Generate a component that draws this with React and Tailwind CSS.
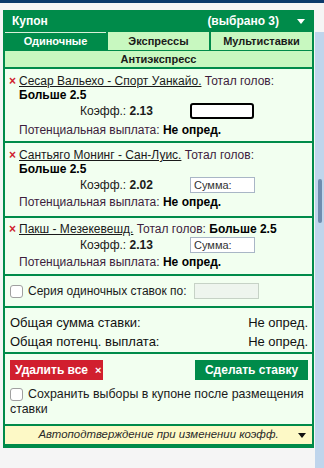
import React from "react";

const GREEN = "bg-[#008b4a]";

function Caret({ className = "" }) {
  return (
    <svg width="8" height="5" viewBox="0 0 8 5" className={className}>
      <path d="M0 0 L8 0 L4 5 Z" fill="currentColor" />
    </svg>
  );
}

function Title({ match, children }) {
  return (
    <div className="flex pl-[4px]">
      <span className="w-[10px] shrink-0 text-[#d01f2f] font-bold leading-[14px] text-[12px]">×</span>
      <div className="leading-[14px]">
        <span className="underline text-[#1a1a1a]">{match}</span>
        <span className="text-[#3d1d3d]"> Тотал голов: </span>
        {children}
      </div>
    </div>
  );
}

function KoefRow({ value, focused, className = "" }) {
  return (
    <div className={"flex items-center pl-[75px] h-[16px] " + className}>
      <div className="w-[110px] leading-[14px] text-[#1a1a1a]">
        Коэфф.: <b>{value}</b>
      </div>
      {focused ? (
        <div className="w-[64px] h-[16px] border-2 border-black rounded-[3px] bg-white" />
      ) : (
        <div className="w-[65px] h-[16px] border border-[#a9b6c6] bg-white flex items-center pl-[3px] text-[11px] text-[#333]">
          Сумма:
        </div>
      )}
    </div>
  );
}

function Payout({ className = "" }) {
  return (
    <div className={"pl-[14px] leading-[14px] " + className}>
      <span className="text-[#3d1d3d]">Потенциальная выплата: </span>
      <b className="text-black">Не опред.</b>
    </div>
  );
}

function Checkbox() {
  return (
    <span className="inline-block w-[13px] h-[13px] border border-[#a0a0a0] rounded-[3px] bg-white align-middle" />
  );
}

export default function App() {
  return (
    <div className="min-h-[468px] bg-[#f5f5f5] font-['Liberation_Sans',Arial,sans-serif] text-[12px] text-black">
      <div className="h-[3px] bg-[#0b3a6b]" />
      <div className="flex">
        <div className="pl-[3px] pt-[7px]">
          <div className={"w-[311px] " + GREEN + " p-[2px] pt-0"}>
            {/* header */}
            <div className="h-[22px] flex items-center pl-[7px] pr-[7px] text-white font-bold text-[12px]">
              <span>Купон</span>
              <span className="ml-auto mr-[18px]">(выбрано 3)</span>
              <Caret className="text-white" />
            </div>
            <div className="flex flex-col gap-[2px]">
              {/* tabs */}
              <div className="grid grid-cols-3 gap-[2px] h-[17px] font-bold text-[11px]">
                <div className="flex items-center justify-center text-white border-t border-[#d8f0d8]">Одиночные</div>
                <div className="flex items-center justify-center bg-[#c8f8c0] text-[#1a1a1a]">Экспрессы</div>
                <div className="flex items-center justify-center bg-[#c8f8c0] text-[#1a1a1a]">Мультиставки</div>
              </div>
              <div className="h-[16px] flex items-center justify-center bg-[#c8f8c0] font-bold text-[11px] text-[#1a1a1a]">
                Антиэкспресс
              </div>

              {/* item 1 */}
              <div className="h-[72px] bg-[#f2fff0] pt-[5px]">
                <Title match="Сесар Вальехо - Спорт Уанкайо." />
                <div className="pl-[14px] leading-[14px] font-bold">Больше 2.5</div>
                <KoefRow value="2.13" focused className="mt-[1px]" />
                <Payout className="mt-[4px]" />
              </div>

              {/* item 2 */}
              <div className="h-[73px] bg-[#f2fff0] pt-[5px]">
                <Title match="Сантьяго Монинг - Сан-Луис." />
                <div className="pl-[14px] leading-[14px] font-bold">Больше 2.5</div>
                <KoefRow value="2.02" className="mt-[1px]" />
                <Payout className="mt-[2px]" />
              </div>

              {/* item 3 */}
              <div className="h-[56px] bg-[#f2fff0] pt-[4px]">
                <Title match="Пакш - Мезекевешд.">
                  <b className="text-black">Больше 2.5</b>
                </Title>
                <KoefRow value="2.13" className="mt-[1px]" />
                <Payout className="mt-[2px]" />
              </div>

              {/* series */}
              <div className="h-[30px] bg-[#f2fff0] flex items-center pl-[5px]">
                <Checkbox />
                <span className="ml-[5px] text-[#1a1a1a]">Серия одиночных ставок по:</span>
                <div className="ml-auto mr-[53px] w-[65px] h-[16px] border border-[#c6d2c6] bg-[#eef5ee]" />
              </div>

              {/* totals */}
              <div className="h-[44px] bg-[#f2fff0] pt-[5px] pl-[5px] pr-[4px] text-[#111] text-[13px]">
                <div className="flex justify-between leading-[19px]">
                  <span>Общая сумма ставки:</span>
                  <span>Не опред.</span>
                </div>
                <div className="flex justify-between leading-[19px]">
                  <span>Общая потенц. выплата:</span>
                  <span>Не опред.</span>
                </div>
              </div>

              {/* buttons */}
              <div className="h-[70px] bg-[#f2fff0] pt-[6px] pl-[5px] pr-[4px]">
                <div className="flex justify-between">
                  <div className="w-[93px] h-[20px] bg-[#d11f2e] text-white font-bold flex items-center pl-[5px]">
                    Удалить все
                    <span className="ml-[7px] text-[11px]">×</span>
                  </div>
                  <div className="w-[113px] h-[20px] bg-[#008b4a] text-white font-bold flex items-center justify-center">
                    Сделать ставку
                  </div>
                </div>
                <div className="mt-[7px] leading-[15px] text-[12.4px] text-[#1a1a1a]">
                  <Checkbox />
                  <span className="ml-[5px]">Сохранить выборы в купоне после размещения ставки</span>
                </div>
              </div>

              {/* yellow */}
              <div className="h-[18px] bg-[#fdf9c6] flex items-center pr-[6px] mb-[2px]">
                <span className="flex-1 text-center italic text-[11.4px] text-[#2a2a2a] pl-[14px]">
                  Автоподтверждение при изменении коэфф.
                </span>
                <Caret className="text-[#111]" />
              </div>
            </div>
          </div>
        </div>
        <div className="ml-auto w-[9px] mt-[29px] bg-[#bfd5ec] min-h-[436px] flex flex-col">
          <div className="mt-[147px] ml-[3px] w-[4px] h-[44px] bg-[#6f8caf] rounded-[2px]" />
        </div>
      </div>
    </div>
  );
}
